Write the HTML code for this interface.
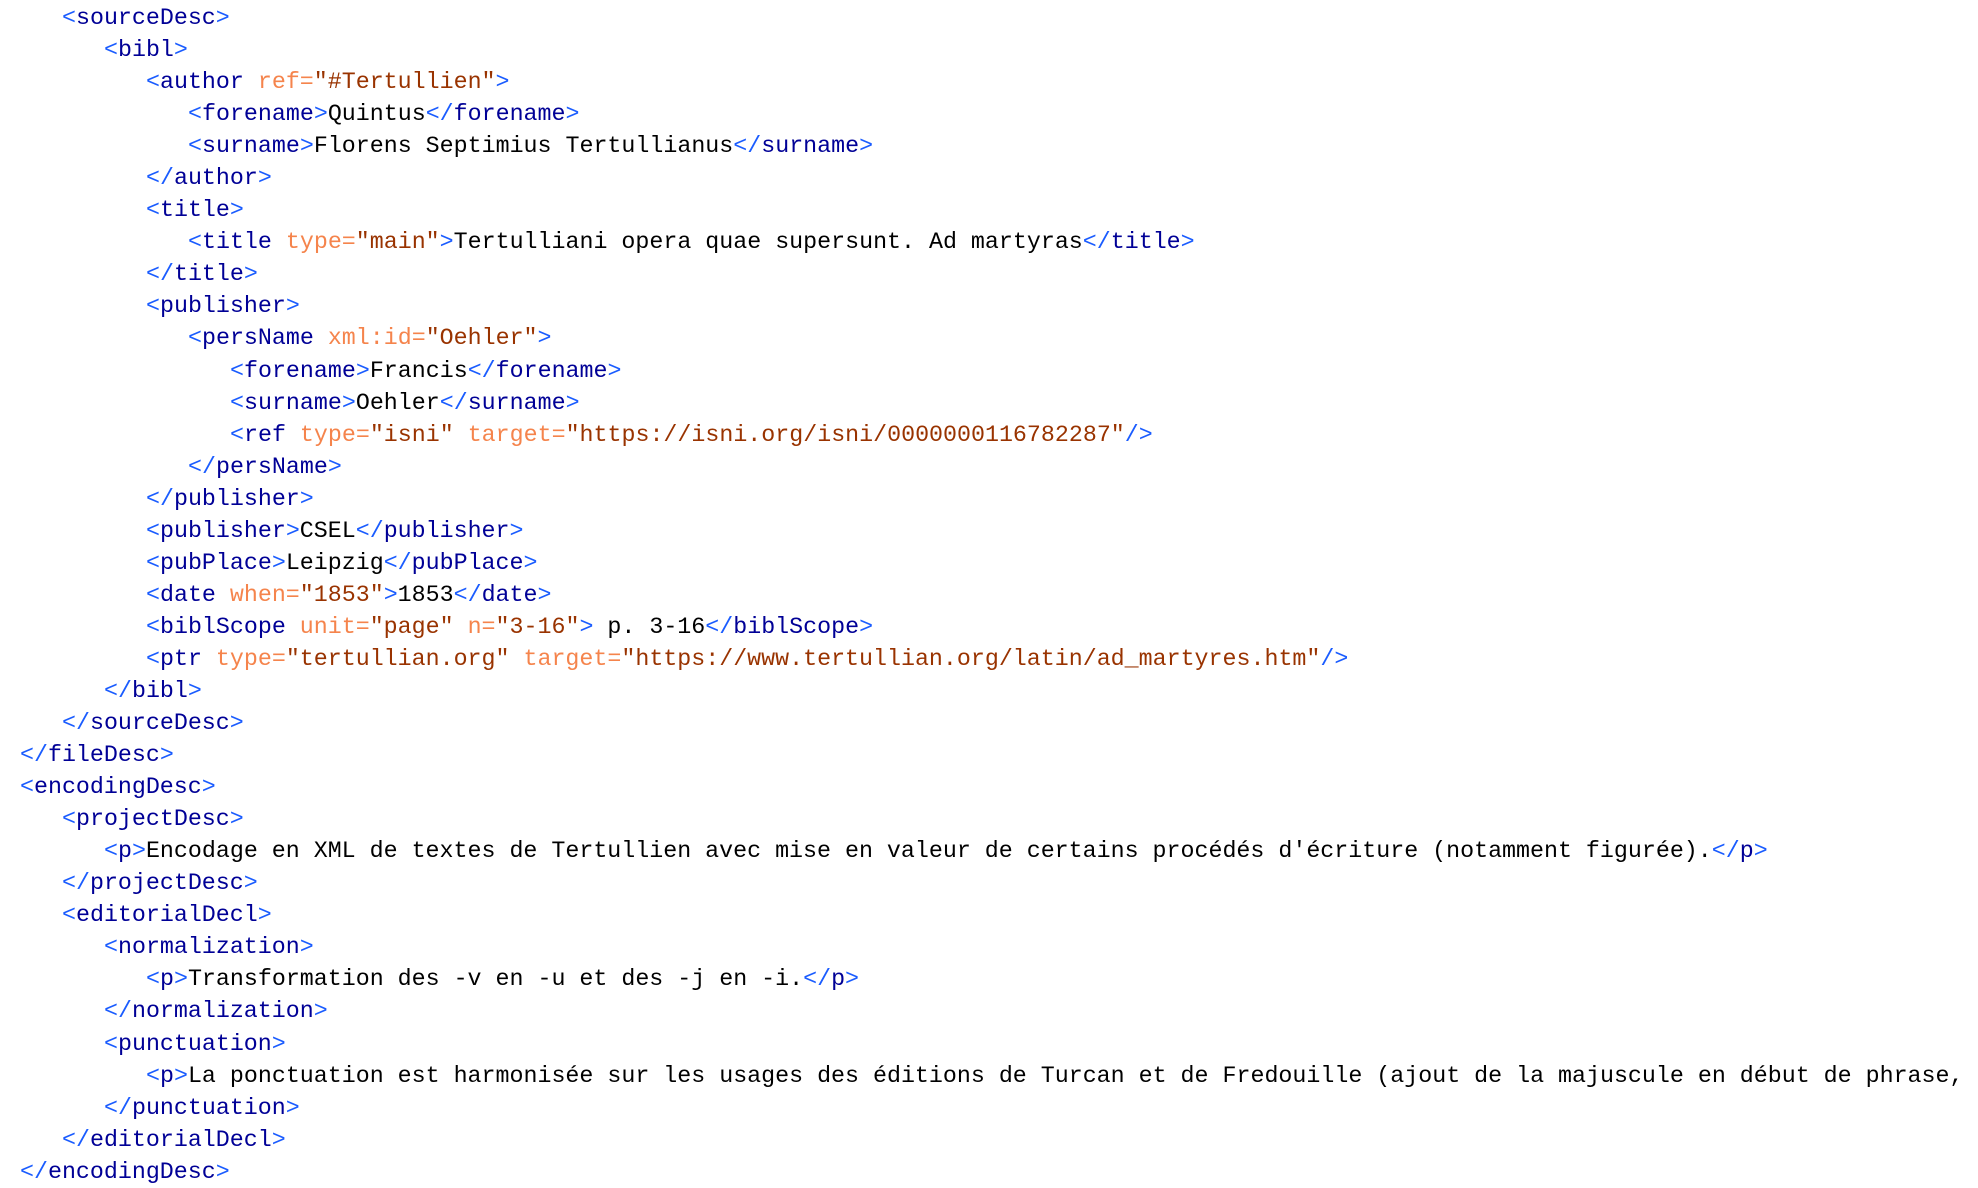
<!DOCTYPE html>
<html><head><meta charset="utf-8"><style>
html,body{margin:0;padding:0;background:#fff;width:1978px;height:1184px;overflow:hidden}
.c{position:absolute;left:0;top:2px;font-family:"Liberation Mono",monospace;font-size:23.3px;line-height:32.05px;color:#000}
.l{height:32.05px;white-space:pre}
.b{color:#1a5cff}.t{color:#000096}.a{color:#f5844c}.v{color:#993300}
</style></head><body><div class="c"><div class="l" style="padding-left:62px"><span class="b">&lt;</span><span class="t">sourceDesc</span><span class="b">&gt;</span></div><div class="l" style="padding-left:104px"><span class="b">&lt;</span><span class="t">bibl</span><span class="b">&gt;</span></div><div class="l" style="padding-left:146px"><span class="b">&lt;</span><span class="t">author </span><span class="a">ref=</span><span class="v">"#Tertullien"</span><span class="b">&gt;</span></div><div class="l" style="padding-left:188px"><span class="b">&lt;</span><span class="t">forename</span><span class="b">&gt;</span>Quintus<span class="b">&lt;/</span><span class="t">forename</span><span class="b">&gt;</span></div><div class="l" style="padding-left:188px"><span class="b">&lt;</span><span class="t">surname</span><span class="b">&gt;</span>Florens Septimius Tertullianus<span class="b">&lt;/</span><span class="t">surname</span><span class="b">&gt;</span></div><div class="l" style="padding-left:146px"><span class="b">&lt;/</span><span class="t">author</span><span class="b">&gt;</span></div><div class="l" style="padding-left:146px"><span class="b">&lt;</span><span class="t">title</span><span class="b">&gt;</span></div><div class="l" style="padding-left:188px"><span class="b">&lt;</span><span class="t">title </span><span class="a">type=</span><span class="v">"main"</span><span class="b">&gt;</span>Tertulliani opera quae supersunt. Ad martyras<span class="b">&lt;/</span><span class="t">title</span><span class="b">&gt;</span></div><div class="l" style="padding-left:146px"><span class="b">&lt;/</span><span class="t">title</span><span class="b">&gt;</span></div><div class="l" style="padding-left:146px"><span class="b">&lt;</span><span class="t">publisher</span><span class="b">&gt;</span></div><div class="l" style="padding-left:188px"><span class="b">&lt;</span><span class="t">persName </span><span class="a">xml:id=</span><span class="v">"Oehler"</span><span class="b">&gt;</span></div><div class="l" style="padding-left:230px"><span class="b">&lt;</span><span class="t">forename</span><span class="b">&gt;</span>Francis<span class="b">&lt;/</span><span class="t">forename</span><span class="b">&gt;</span></div><div class="l" style="padding-left:230px"><span class="b">&lt;</span><span class="t">surname</span><span class="b">&gt;</span>Oehler<span class="b">&lt;/</span><span class="t">surname</span><span class="b">&gt;</span></div><div class="l" style="padding-left:230px"><span class="b">&lt;</span><span class="t">ref </span><span class="a">type=</span><span class="v">"isni"</span> <span class="a">target=</span><span class="v">"https://isni.org/isni/0000000116782287"</span><span class="b">/&gt;</span></div><div class="l" style="padding-left:188px"><span class="b">&lt;/</span><span class="t">persName</span><span class="b">&gt;</span></div><div class="l" style="padding-left:146px"><span class="b">&lt;/</span><span class="t">publisher</span><span class="b">&gt;</span></div><div class="l" style="padding-left:146px"><span class="b">&lt;</span><span class="t">publisher</span><span class="b">&gt;</span>CSEL<span class="b">&lt;/</span><span class="t">publisher</span><span class="b">&gt;</span></div><div class="l" style="padding-left:146px"><span class="b">&lt;</span><span class="t">pubPlace</span><span class="b">&gt;</span>Leipzig<span class="b">&lt;/</span><span class="t">pubPlace</span><span class="b">&gt;</span></div><div class="l" style="padding-left:146px"><span class="b">&lt;</span><span class="t">date </span><span class="a">when=</span><span class="v">"1853"</span><span class="b">&gt;</span>1853<span class="b">&lt;/</span><span class="t">date</span><span class="b">&gt;</span></div><div class="l" style="padding-left:146px"><span class="b">&lt;</span><span class="t">biblScope </span><span class="a">unit=</span><span class="v">"page"</span> <span class="a">n=</span><span class="v">"3-16"</span><span class="b">&gt;</span> p. 3-16<span class="b">&lt;/</span><span class="t">biblScope</span><span class="b">&gt;</span></div><div class="l" style="padding-left:146px"><span class="b">&lt;</span><span class="t">ptr </span><span class="a">type=</span><span class="v">"tertullian.org"</span> <span class="a">target=</span><span class="v">"https://www.tertullian.org/latin/ad_martyres.htm"</span><span class="b">/&gt;</span></div><div class="l" style="padding-left:104px"><span class="b">&lt;/</span><span class="t">bibl</span><span class="b">&gt;</span></div><div class="l" style="padding-left:62px"><span class="b">&lt;/</span><span class="t">sourceDesc</span><span class="b">&gt;</span></div><div class="l" style="padding-left:20px"><span class="b">&lt;/</span><span class="t">fileDesc</span><span class="b">&gt;</span></div><div class="l" style="padding-left:20px"><span class="b">&lt;</span><span class="t">encodingDesc</span><span class="b">&gt;</span></div><div class="l" style="padding-left:62px"><span class="b">&lt;</span><span class="t">projectDesc</span><span class="b">&gt;</span></div><div class="l" style="padding-left:104px"><span class="b">&lt;</span><span class="t">p</span><span class="b">&gt;</span>Encodage en XML de textes de Tertullien avec mise en valeur de certains procédés d'écriture (notamment figurée).<span class="b">&lt;/</span><span class="t">p</span><span class="b">&gt;</span></div><div class="l" style="padding-left:62px"><span class="b">&lt;/</span><span class="t">projectDesc</span><span class="b">&gt;</span></div><div class="l" style="padding-left:62px"><span class="b">&lt;</span><span class="t">editorialDecl</span><span class="b">&gt;</span></div><div class="l" style="padding-left:104px"><span class="b">&lt;</span><span class="t">normalization</span><span class="b">&gt;</span></div><div class="l" style="padding-left:146px"><span class="b">&lt;</span><span class="t">p</span><span class="b">&gt;</span>Transformation des -v en -u et des -j en -i.<span class="b">&lt;/</span><span class="t">p</span><span class="b">&gt;</span></div><div class="l" style="padding-left:104px"><span class="b">&lt;/</span><span class="t">normalization</span><span class="b">&gt;</span></div><div class="l" style="padding-left:104px"><span class="b">&lt;</span><span class="t">punctuation</span><span class="b">&gt;</span></div><div class="l" style="padding-left:146px"><span class="b">&lt;</span><span class="t">p</span><span class="b">&gt;</span>La ponctuation est harmonisée sur les usages des éditions de Turcan et de Fredouille (ajout de la majuscule en début de phrase,</div><div class="l" style="padding-left:104px"><span class="b">&lt;/</span><span class="t">punctuation</span><span class="b">&gt;</span></div><div class="l" style="padding-left:62px"><span class="b">&lt;/</span><span class="t">editorialDecl</span><span class="b">&gt;</span></div><div class="l" style="padding-left:20px"><span class="b">&lt;/</span><span class="t">encodingDesc</span><span class="b">&gt;</span></div></div></body></html>
